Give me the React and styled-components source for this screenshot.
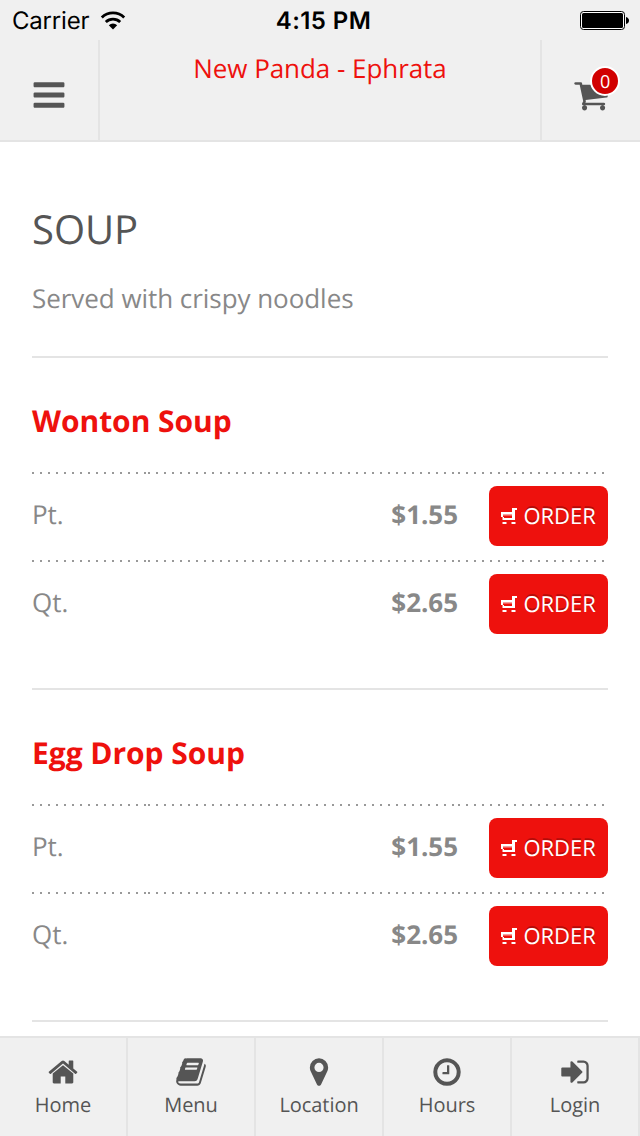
import styled, { createGlobalStyle } from "styled-components";

const GlobalStyle = createGlobalStyle`
  * {
    box-sizing: border-box;
  }

  body {
    margin: 0;
    background: #fff;
    font-family: 'Open Sans', 'Noto Sans', sans-serif;
    color: #888;
    letter-spacing: -0.05px;
    text-rendering: geometricPrecision;
  }

  h1, h2, p {
    margin: 0;
  }

  svg {
    display: block;
    flex-shrink: 0;
  }
`

const Screen = styled.div`
  width: 640px;
  height: 1136px;
  display: flex;
  flex-direction: column;
  overflow: hidden;
`

const StatusBar = styled.div`
  height: 40px;
  flex-shrink: 0;
  display: grid;
  grid-template-columns: 1fr auto 1fr;
  align-items: center;
  padding: 2px 11px 0 12px;
  background: #f0f0f0;
  color: #000;
  font-family: 'Inter', sans-serif;
  font-size: 24px;
  line-height: 38px;
`

const Carrier = styled.div`
  display: flex;
  align-items: center;
  gap: 11px;
  letter-spacing: -0.2px;
`

const Clock = styled.div`
  padding-left: 6px;
  font-weight: 600;
  letter-spacing: 0.4px;
`

const Battery = styled.div`
  display: flex;
  justify-content: flex-end;
`

const Header = styled.header`
  height: 102px;
  flex-shrink: 0;
  display: flex;
  background: #f0f0f0;
  border-bottom: 2px solid #e4e4e4;
`

const HeaderButton = styled.div`
  width: 100px;
  display: flex;
  align-items: center;
  justify-content: center;
  position: relative;
  padding: 10px 0 0;
  color: #555;
  border-right: ${props => props.$side === "left" ? "2px solid #e4e4e4" : "0"};
  border-left: ${props => props.$side === "right" ? "2px solid #e4e4e4" : "0"};
`

const Title = styled.h1`
  flex: 1;
  padding-top: 9px;
  text-align: center;
  font-size: 26px;
  font-weight: 400;
  line-height: 38px;
  color: #ee110d;
`

const Badge = styled.span`
  position: absolute;
  top: 26px;
  right: 20px;
  width: 30px;
  height: 30px;
  border: 2px solid #fff;
  border-radius: 50%;
  background: #d10000;
  color: #fff;
  font-size: 18px;
  line-height: 28px;
  text-align: center;
`

const Content = styled.main`
  flex: 1;
  min-height: 0;
  overflow: hidden;
  padding: 59px 32px 0;
`

const SectionTitle = styled.h2`
  font-size: 40px;
  font-weight: 400;
  line-height: 56px;
  color: #555;
`

const Description = styled.p`
  margin-top: 22px;
  padding-bottom: 39px;
  font-size: 26px;
  line-height: 38px;
`

const Item = styled.section`
  height: 332px;
  border-top: 2px solid #e4e4e4;
  padding-top: 42px;
`

const ItemName = styled.h2`
  font-size: 30px;
  font-weight: 700;
  line-height: 42px;
  color: #ee110d;
  margin-bottom: 30px;
`

const dots = "repeating-linear-gradient(90deg, #999 0 2px, transparent 2px 8px)"

const PriceRow = styled.div`
  height: 88px;
  padding-top: 14px;
  display: flex;
  align-items: flex-start;
  font-size: 26px;
  line-height: 56px;
  background:
    ${dots} 0 0 / 116px 2px no-repeat,
    ${dots} 116px 0 / 310px 2px no-repeat,
    ${dots} 426px 0 / 150px 2px no-repeat;
`

const Price = styled.strong`
  margin-left: auto;
  margin-right: 31px;
`

const OrderButton = styled.div`
  width: 119px;
  height: 60px;
  display: flex;
  align-items: center;
  gap: 6.5px;
  padding-left: 12px;
  border-radius: 8px;
  background: #ee110d;
  color: #fff;
  font-size: 22px;
  line-height: 60px;
  text-shadow: 0 -2px 0 rgba(0, 0, 0, 0.25);
`

const TabBar = styled.nav`
  height: 100px;
  flex-shrink: 0;
  display: grid;
  grid-template-columns: repeat(5, 1fr);
  background: #f0f0f0;
  border-top: 2px solid #e4e4e4;
`

const Tab = styled.div`
  display: flex;
  flex-direction: column;
  align-items: center;
  padding-top: 18px;
  border-right: 2px solid #e4e4e4;
  color: #555;
  font-size: 20px;
  line-height: 34px;
`

const paths = {
  bars: "M1664 1344v128q0 26-19 45t-45 19h-1408q-26 0-45-19t-19-45v-128q0-26 19-45t45-19h1408q26 0 45 19t19 45zm0-512v128q0 26-19 45t-45 19h-1408q-26 0-45-19t-19-45v-128q0-26 19-45t45-19h1408q26 0 45 19t19 45zm0-512v128q0 26-19 45t-45 19h-1408q-26 0-45-19t-19-45v-128q0-26 19-45t45-19h1408q26 0 45 19t19 45z",
  cart: "M704 1536q0 52-38 90t-90 38-90-38-38-90 38-90 90-38 90 38 38 90zm896 0q0 52-38 90t-90 38-90-38-38-90 38-90 90-38 90 38 38 90zm128-1088v512q0 24-16.5 42.5t-40.5 21.5l-1044 122q13 60 13 70 0 16-24 64h920q26 0 45 19t19 45-19 45-45 19h-1024q-26 0-45-19t-19-45q0-11 8-31.5t16-36 21.5-40 15.5-29.5l-177-823h-204q-26 0-45-19t-19-45 19-45 45-19h256q16 0 28.5 6.5t19.5 15.5 13 24.5 8 26 5.5 29.5 4.5 26h1201q26 0 45 19t19 45z",
  home: "M1472 992v480q0 26-19 45t-45 19h-384v-384h-256v384h-384q-26 0-45-19t-19-45v-480q0-1 .5-3t.5-3l575-474 575 474q1 2 1 6zm223-69l-62 74q-8 9-21 11h-3q-13 0-21-7l-692-577-692 577q-12 8-24 7-13-2-21-11l-62-74q-8-10-7-23.5t11-21.5l719-599q32-26 76-26t76 26l244 204v-195q0-14 9-23t23-9h192q14 0 23 9t9 23v408l219 182q10 8 11 21.5t-7 23.5z",
  book: "M1703 478q40 57 18 129l-275 906q-19 64-76.5 107.5t-122.5 43.5h-923q-77 0-148.5-53.5t-99.5-131.5q-24-67-2-127 0-4 3-27t4-37q1-8-3-21.5t-3-19.5q2-11 8-21t16.5-23.5 16.5-23.5q23-38 45-91.5t30-91.5q3-10 .5-30t-.5-28q3-11 17-28t17-23q21-36 42-92t25-90q1-9-2.5-32t.5-28q4-13 22-30.5t22-22.5q19-26 42.5-84.5t27.5-96.5q1-8-3-25.5t-2-26.5q2-8 9-18t18-23 17-21q8-12 16.5-30.5t15-35 16-36 19.5-32 26.5-23.5 36-11.5 47.5 5.5l-1 3q38-9 51-9h761q74 0 114 56t18 130l-274 906q-36 119-71.5 153.5t-128.5 34.5h-869q-27 0-38 15-11 16-1 43 24 70 144 70h923q29 0 56-15.5t35-41.5l300-987q7-22 5-57 38 15 59 43zm-1064 2q-4 13 2 22.5t20 9.5h608q13 0 25.5-9.5t16.5-22.5l21-64q4-13-2-22.5t-20-9.5h-608q-13 0-25.5 9.5t-16.5 22.5zm-83 256q-4 13 2 22.5t20 9.5h608q13 0 25.5-9.5t16.5-22.5l21-64q4-13-2-22.5t-20-9.5h-608q-13 0-25.5 9.5t-16.5 22.5z",
  marker: "M1152 640q0-106-75-181t-181-75-181 75-75 181 75 181 181 75 181-75 75-181zm256 0q0 109-33 179l-364 774q-16 33-47.5 52t-67.5 19-67.5-19-46.5-52l-365-774q-33-70-33-179 0-212 150-362t362-150 362 150 150 362z",
  clock: "M1024 544v448q0 14-9 23t-23 9h-320q-14 0-23-9t-9-23v-64q0-14 9-23t23-9h224v-352q0-14 9-23t23-9h64q14 0 23 9t9 23zm416 352q0-148-73-273t-198-198-273-73-273 73-198 198-73 273 73 273 198 198 273 73 273-73 198-198 73-273zm224 0q0 209-103 385.5t-279.5 279.5-385.5 103-385.5-103-279.5-279.5-103-385.5 103-385.5 279.5-279.5 385.5-103 385.5 103 279.5 279.5 103 385.5z",
  login: "M1312 896q0 26-19 45l-544 544q-19 19-45 19t-45-19-19-45v-288h-448q-26 0-45-19t-19-45v-384q0-26 19-45t45-19h448v-288q0-26 19-45t45-19 45 19l544 544q19 19 19 45zm352-352v704q0 119-84.5 203.5t-203.5 84.5h-320q-13 0-22.5-9.5t-9.5-22.5q0-4-1-20t-.5-26.5 3-23.5 10-19.5 20.5-6.5h320q66 0 113-47t47-113v-704q0-66-47-113t-113-47h-312l-11.5-1-11.5-3-8-5.5-7-9-2-13.5q0-4-1-20t-.5-26.5 3-23.5 10-19.5 20.5-6.5h320q119 0 203.5 84.5t84.5 203.5z",
}

const Icon = ({ name, size }) => (
  <svg width={size} height={size} viewBox="0 0 1792 1792" fill="currentColor">
    <path d={paths[name]} />
  </svg>
)

const WifiIcon = () => (
  <svg width="26" height="20" viewBox="0 0 26 20" fill="none" stroke="#000" strokeWidth="2.8">
    <path d="M1.8 6.4a16 16 0 0 1 22.4 0" />
    <path d="M5.8 11a10.4 10.4 0 0 1 14.4 0" />
    <path d="M13 18.6l-4.2-4.4a6 6 0 0 1 8.4 0z" fill="#000" stroke="none" />
  </svg>
)

const BatteryIcon = () => (
  <svg width="49" height="20" viewBox="0 0 49 20">
    <rect x="0.5" y="0.5" width="44" height="18" rx="3" fill="#fff" stroke="#000" />
    <rect x="2" y="2" width="41" height="15" rx="1.5" />
    <path d="M46 6q3 1 3 3.5t-3 3.5z" />
  </svg>
)

const SmallCartIcon = () => (
  <svg width="16" height="16" viewBox="0 0 16 16" fill="#fff">
    <path d="M11 0h5v2h-2v10H1.5V9H0V4h11zM2 6v3h1v1h8V6z" fillRule="evenodd" />
    <path d="M2 6h9v1.5H2z" opacity="0.6" />
    <path d="M1.5 14h4v2h-4zM10.5 14h4v2h-4z" />
  </svg>
)

const items = [
  { name: "Wonton Soup", sizes: [["Pt.", "$1.55"], ["Qt.", "$2.65"]] },
  { name: "Egg Drop Soup", sizes: [["Pt.", "$1.55"], ["Qt.", "$2.65"]] },
]

const tabs = [
  ["home", "Home"],
  ["book", "Menu"],
  ["marker", "Location"],
  ["clock", "Hours"],
  ["login", "Login"],
]

const App = () => {
  return (
    <Screen>
      <GlobalStyle />
      <StatusBar>
        <Carrier>Carrier <WifiIcon /></Carrier>
        <Clock>4:15 PM</Clock>
        <Battery><BatteryIcon /></Battery>
      </StatusBar>

      <Header>
        <HeaderButton $side="left"><Icon name="bars" size={36} /></HeaderButton>
        <Title>New Panda - Ephrata</Title>
        <HeaderButton $side="right">
          <Icon name="cart" size={36} />
          <Badge>0</Badge>
        </HeaderButton>
      </Header>

      <Content>
        <SectionTitle>SOUP</SectionTitle>
        <Description>Served with crispy noodles</Description>
        {items.map(item => (
          <Item key={item.name}>
            <ItemName>{item.name}</ItemName>
            {item.sizes.map(([size, price]) => (
              <PriceRow key={size}>
                <span>{size}</span>
                <Price>{price}</Price>
                <OrderButton><SmallCartIcon /> ORDER</OrderButton>
              </PriceRow>
            ))}
          </Item>
        ))}
        <Item />
      </Content>

      <TabBar>
        {tabs.map(([icon, label]) => (
          <Tab key={label}>
            <Icon name={icon} size={32} />
            {label}
          </Tab>
        ))}
      </TabBar>
    </Screen>
  );
};

export default App;
